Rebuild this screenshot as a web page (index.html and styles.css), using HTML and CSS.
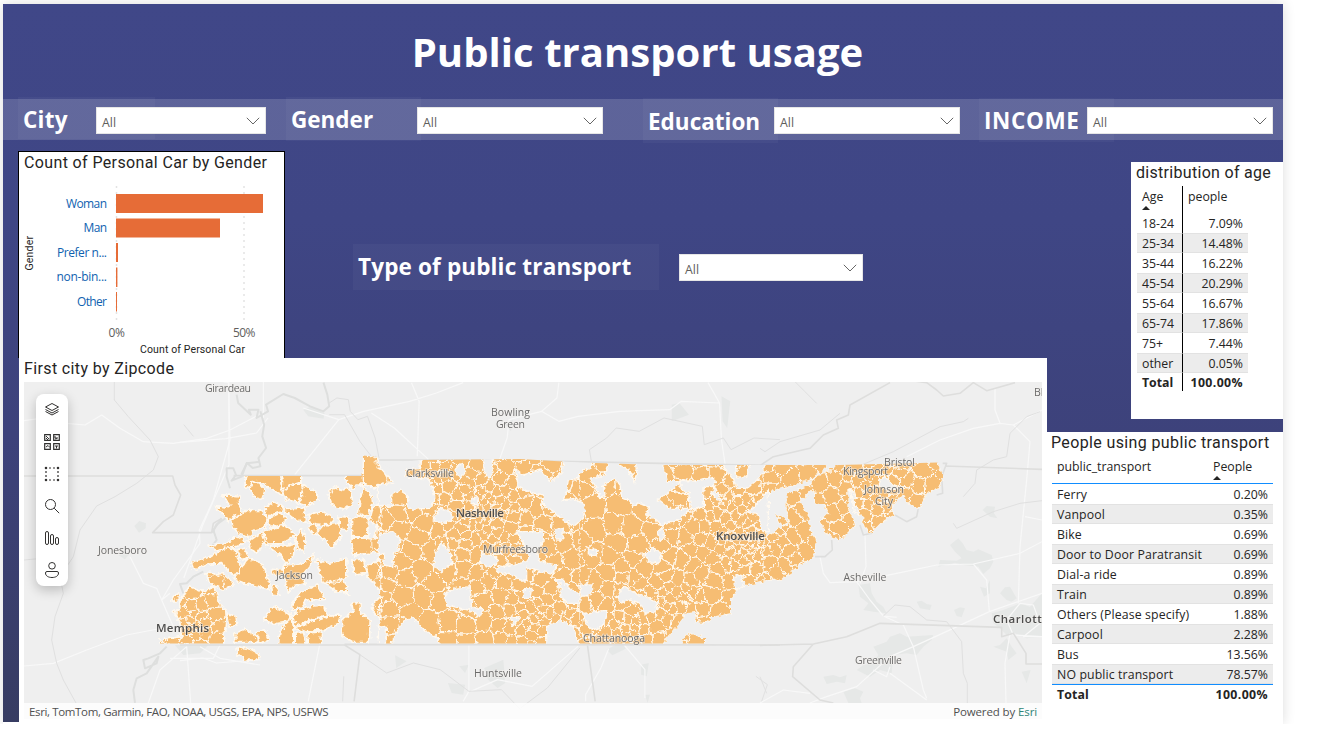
FILE: index.html
```html
<!DOCTYPE html>
<html lang="en">
<head>
<meta charset="utf-8">
<title>Public transport usage</title>
<link rel="stylesheet" href="styles.css">
</head>
<body>
<main class="report">
  <header class="report-header"><h1>Public transport usage</h1></header>

  <section class="filters">
    <div class="filter filter-city"><span class="filter-label">City</span><div class="select">All<svg class="chevron" viewBox="0 0 14 8"><path d="M.8.8 7 7 13.2.8"/></svg></div></div>
    <div class="filter filter-gender"><span class="filter-label">Gender</span><div class="select">All<svg class="chevron" viewBox="0 0 14 8"><path d="M.8.8 7 7 13.2.8"/></svg></div></div>
    <div class="filter filter-education"><span class="filter-label">Education</span><div class="select">All<svg class="chevron" viewBox="0 0 14 8"><path d="M.8.8 7 7 13.2.8"/></svg></div></div>
    <div class="filter filter-income"><span class="filter-label">INCOME</span><div class="select">All<svg class="chevron" viewBox="0 0 14 8"><path d="M.8.8 7 7 13.2.8"/></svg></div></div>
  </section>

  <div class="body">
    <div class="left">
      <div class="top-row">
        <section class="card chart-card">
          <h2 class="title">Count of Personal Car by Gender</h2>
          <svg class="chart" viewBox="19 176 265 182">
            <path class="grid" d="M116.500 186V323M244 186V323"/>
            <g class="bars">
              <rect x="116" y="194" width="147" height="19"/>
              <rect x="116" y="218.500" width="104" height="19"/>
              <rect x="116" y="243" width="2" height="19"/>
              <rect x="116" y="267.500" width="1.400" height="19.500"/>
              <rect x="116" y="292" width="1" height="19.500"/>
            </g>
            <g class="categories">
              <text x="66" y="208" textLength="41">Woman</text>
              <text x="83.500" y="232" textLength="23.500">Man</text>
              <text x="57" y="257" textLength="50">Prefer n...</text>
              <text x="56.500" y="281" textLength="50.500">non-bin...</text>
              <text x="77" y="306" textLength="30">Other</text>
            </g>
            <g class="ticks">
              <text x="108.500" y="337" textLength="16.500">0%</text>
              <text x="233" y="337" textLength="22.500">50%</text>
            </g>
            <g class="axis-titles">
              <text x="140" y="353" textLength="105">Count of Personal Car</text>
              <text transform="translate(33 270.500) rotate(-90)" textLength="34.500">Gender</text>
            </g>
          </svg>
        </section>
        <div class="filter filter-type"><span class="filter-label">Type of public transport</span><div class="select">All<svg class="chevron" viewBox="0 0 14 8"><path d="M.8.8 7 7 13.2.8"/></svg></div></div>
      </div>

      <section class="card map-card">
        <h2 class="title">First city by Zipcode</h2>
        <div class="map">
          <svg class="map-canvas" viewBox="24 382 1018 337">
            <defs>
              <filter id="rough" x="0" y="0" width="1" height="1"><feTurbulence type="fractalNoise" baseFrequency="0.25" numOctaves="2" seed="8"/><feDisplacementMap in="SourceGraphic" scale="6" xChannelSelector="R" yChannelSelector="G"/></filter>
              <clipPath id="state-outline">
                <path d="M150 476H361.500L363 455.500 378 457 380 463 394 470 394 480H402V462L420 460 520 459 580 462.500 663 465H840L920 463 937 462.500 950 470V643.500H261V664H232V643.500H150Z"/>
              </clipPath>
              <clipPath id="zip-area">
                <use href="#west"/><use href="#middle"/><use href="#east"/><use href="#northeast"/>
              </clipPath>
            </defs>
            <rect class="land" x="24" y="382" width="1018" height="337"/>

            <g class="towns">
              <path transform="translate(0 380) scale(.33333)" d="M403 438 418 423 438 430 437 445 417 458ZM355 525 390 520 375 538ZM525 795H625L600 820 550 825Z"/>
              <path transform="translate(180 378) scale(.38265 .33333)" d="M322 95 345 85 378 105 375 122 335 115ZM1285 80 1305 75 1330 110 1285 130ZM1415 55 1438 70 1430 150 1418 130ZM850 140 870 125 865 160ZM562 832 592 850 565 870ZM730 865 755 860 745 885ZM700 915 745 920 740 950 710 945ZM795 870 845 845 850 915 830 930 805 905ZM1115 815 1155 790 1165 812 1130 832ZM1205 860 1225 855 1220 895 1205 890ZM1215 950 1228 950 1222 975Z"/>
              <path transform="translate(760 380) scale(.33333)" d="M570 495 595 475 608 490 620 510 640 515 655 508 695 525 700 545 690 565 670 582 655 560 610 555 585 548 535 560 540 540 590 542 605 535 585 515ZM668 390 680 378 705 380 702 400 712 415 690 410ZM295 615 330 610 335 640 350 665 370 680 380 700 340 695 310 690 325 670 300 650ZM470 665 485 662 500 672 515 675 510 690 480 685ZM582 690 600 682 615 685 605 712 590 708ZM660 620 678 625 690 600 690 640 672 650ZM720 640 735 622 750 620 770 655 755 665 740 660ZM695 700 730 690 780 670 810 680 846 640V770L800 775 765 760 740 765 720 745 700 730ZM340 800 380 785 390 770 420 760 440 770 520 765 515 780 490 800 470 825 440 820 400 825 395 880 360 870 330 890 290 870 310 855 340 850 355 825ZM190 890 220 885 240 892 260 885 255 910 230 905 200 912ZM250 935 285 925 310 935 300 955 305 969 265 969ZM700 800 720 795 740 775 755 800 770 820 745 840 740 815ZM785 875 812 870 800 910Z"/>
            </g>

            <g class="roads">
              <path transform="translate(0 380) scale(.33333)" d="M72 122 145 112 200 130 255 135 305 105 360 145 430 185 520 190 620 175 690 150 770 108M685 0 690 180 640 360 598 450 600 490 520 600 485 660M390 530 430 610 470 625 485 660 520 740M485 660 510 640M72 858 160 850 260 810 380 765 520 738M560 800 572 969M560 800 480 870 445 969M600 800 660 835 780 855M510 835H640L660 795"/>
              <path transform="translate(180 378) scale(.38265 .33333)" d="M0 193 120 182 200 165 230 120M218 10V120M322 90 415 125 480 100 600 70 670 45 740 14M415 125 300 290M500 105 560 150 650 245M605 14 625 70 620 235M990 14 985 60 945 100 860 125 855 180 835 245M945 100 990 130 1040 115 1150 100 1280 95 1310 70 1410 75 1415 185 1425 262M1380 14 1410 75M755 800V940L740 970M760 940 830 905 920 925 1040 805M1120 812 1100 870 1060 950 1060 970M1160 800 1215 875V960M0 848 60 840 95 855 210 845M365 800 335 970M60 0 128 14V260L60 440 10 600"/>
              <path transform="translate(760 380) scale(.33333)" d="M705 25 705 90 720 130 640 145 540 180 440 230M720 130 760 135 810 185 800 300 780 500 775 670M760 135 846 90M180 530 190 580 210 608 290 605 410 580 530 555 640 552 780 520 846 485M290 605 330 660 370 708 430 735 460 800 490 930 500 955M370 708 410 712M640 552 680 600 688 695 580 745 460 800 390 830 290 920 200 950 150 969M688 695 846 640M795 410 846 420M845 770 760 765 740 720 780 670 820 675 840 730 790 770ZM750 760 735 850 738 969M390 880 500 960M340 870 380 890 390 860M0 969 70 930 150 940M315 465 318 560 300 610"/>
            </g>

            <g class="rivers">
              <path transform="translate(0 380) scale(.33333)" d="M343 0V60L385 110 450 180 475 230 460 270 410 310 345 350 290 378 240 450 220 530 180 590 190 640 165 710 155 780 170 850 190 900 228 969M72 540 160 532"/>
              <path transform="translate(180 378) scale(.38265 .33333)" d="M390 110 430 110 470 190 500 235M390 75 410 60 440 65 445 100 465 125 490 115 510 180 520 240M1075 250 1070 215 1115 180 1140 150 1200 160 1265 120 1365 145 1370 200 1420 180 1440 215 1500 180 1568 185M470 830 540 885 610 855 680 875 755 940 840 935 890 995M890 990 960 930 1045 810M428 895 425 970M1505 895 1535 920 1520 970M10 140 35 175"/>
              <path transform="translate(760 380) scale(.33333)" d="M100 0 135 35 170 70M0 205 15 215 60 185 180 150 240 100M300 257 400 215 540 140 610 125 625 115M610 350 645 310 650 270 700 240 740 230 750 160 800 110 840 95M580 430 590 445 700 395 780 370 846 362M370 708 405 675 450 680 500 720 560 725 605 785 610 880 622 910V969M0 890 20 940"/>
            </g>
            <g class="borders">
              <path transform="translate(0 380) scale(.33333)" d="M72 288H518L525 315 542 345 520 405 490 425 458 458H635L640 430 665 415"/>
              <path transform="translate(180 378) scale(.38265 .33333)" d="M140 293H480M520 246H800L1568 263M0 801H430L470 830 455 970M430 799 1568 801M1065 803 1085 970M520 246 510 235"/>
              <path transform="translate(760 380) scale(.33333)" d="M0 257 40 230 150 205 190 165 235 145 230 120 265 105 270 75 390 8M440 0 500 8 530 30 550 48 600 40 640 8 680 32 765 8M548 250 560 250 545 290 548 340 530 345M555 258 846 268M300 435 310 465 335 460M165 530 195 530 217 510 215 480M405 405 440 425 470 410 475 385M0 796 160 792 260 770 360 730 725 742V770L760 760 798 820V852H846M160 792 100 860 98 890 180 960 220 969"/>
            </g>
            <g class="big-rivers">
              <path transform="translate(0 380) scale(.33333)" d="M690 325 680 290 680 265 700 265 708 285 695 302 725 290 740 250 780 245M665 415 640 450 650 480 635 500M610 575 580 590 560 610 540 612 550 640M500 800 480 820 445 835 430 840 435 865 470 850 475 830 440 880 410 895 400 930 405 969"/>
              <path transform="translate(180 378) scale(.38265 .33333)" d="M148 50 152 75 185 110 180 95 205 95 200 120 230 100 225 80 270 48 300 60 340 85 375 100 390 85 385 50 375 14M210 100 220 140 215 175 225 210 205 240 210 265 190 270 175 255 160 290M85 465 95 440 120 420"/>
            </g>

            <g clip-path="url(#state-outline)">
            <g filter="url(#rough)">
              <g class="zip-fill">
                <path id="west" transform="translate(150 440) scale(.33333)" d="M285 125 290 100H390L398 125 395 162 365 150 340 130 310 122 296 142 287 140ZM305 128 325 125 345 150 335 178 315 172 300 148ZM390 100 455 100V125L425 135 400 150ZM398 155 430 130 455 130 458 165 440 185 410 180ZM460 135 500 155 505 180 470 198 448 190ZM535 165 550 142 580 150 600 142 608 190 585 208 555 200 540 185ZM588 100H640V132H620L610 148 590 128ZM640 45 678 48 685 70 728 92 715 100 730 130 700 128 675 143 640 133ZM640 138 665 170 668 195 650 228 625 225 630 185ZM196 200 225 205 240 195 218 165 272 168 265 190 278 220 250 235 235 245 225 225 212 215ZM243 235 290 212 330 212 352 235 345 262 310 270 300 290 265 280 250 260ZM345 205 370 185 400 200 395 215 360 225 352 240ZM355 235 390 220 410 235 395 255 360 262ZM400 210 460 203 470 248 430 235ZM335 275 405 255 435 285 400 310 350 312ZM175 315 220 312 265 290 290 305 250 322 200 332ZM300 300 335 275 350 295 320 340 295 320ZM262 330 285 325 295 350 275 362ZM125 365 180 352 230 320 255 330 272 380 265 405 240 400 215 370 170 372 130 390ZM255 410 295 355 335 370 360 430 358 448 310 435 260 425ZM355 320 400 318 435 310 430 345 410 372 390 345ZM435 290 452 270 465 290 463 335 445 325ZM400 380 460 370 488 345 480 380 455 410 465 430 430 440 415 455 408 430 400 400ZM365 388 400 390 395 408 368 405ZM365 440 378 438 388 465 368 462ZM475 225 515 215 550 235 540 255 480 250ZM475 260 495 250 505 275 490 283ZM500 280 520 255 570 250 572 290 545 325 525 300ZM565 230 598 232 595 272 570 265ZM170 400 220 402 252 432 220 450 200 440 178 428ZM500 360 540 370 590 355V410L560 430 520 425 505 385ZM525 430 580 415 600 470 590 455 560 455ZM425 495 450 460 500 435 525 478 470 480 455 500 430 510ZM90 485 118 440 155 455 195 440 208 490 225 515 228 530 220 620H30V600L95 590 90 545 68 515 90 512ZM65 480 85 455 88 480 75 485ZM232 520 258 530 260 555 240 560ZM255 580 285 568 320 590 322 607H255ZM322 575 345 570 357 600 340 607H325ZM262 620 300 628 328 645 320 660 285 660 262 640ZM340 540 370 500 420 520 415 545 375 552ZM385 620 390 575 425 530 432 570 430 620ZM430 530 440 515 480 500 520 495 530 525 480 540 435 560ZM435 565 480 545 530 530 570 525 565 550 520 570 470 575ZM436 580 460 578 470 620H436ZM474 580 515 575 510 620H474ZM575 540 610 515 605 490 630 488 632 520 660 540 658 607H612L575 585ZM605 235 640 225 655 240 652 290H605ZM670 200 692 198V268L660 240ZM605 295H650L675 300 680 255 692 290V335L650 340 610 345ZM605 360 640 358 648 400 615 405ZM650 380 692 360V450L655 410ZM665 495 692 470V540L670 515Z"/>
                <path id="middle" transform="translate(380 440) scale(.33333)" d="M0 50H602V620H0Z"/>
                <path id="east" transform="translate(580 440) scale(.33333)" d="M0 55H560V422L500 435 485 410 470 450 450 480V520L400 530 375 550 345 545 350 515 320 520 300 545 265 590 240 620H0ZM305 620V600L330 580 372 595V620Z"/>
                <path id="northeast" transform="translate(760 380) scale(.33333)" d="M12 245H215L150 300 100 315 40 330 12 345ZM80 345 150 315 170 310 155 330 120 365 145 410 150 450 168 480 160 530 120 555 110 565 60 600H12V480L50 450 90 430 80 390ZM48 402 85 425 65 438ZM155 300 250 245H370L530 240 548 290 540 320 500 340 475 385 440 365 430 340 395 380 402 405 370 420 332 460 310 435V410L285 400 280 370 275 340 265 325V380L285 435 240 480 200 460 180 425 205 400 195 375 165 370V340L155 320Z"/>
              </g>
              <use class="west-grow" href="#west"/>
              <use class="west-edge" href="#west"/>
              <g clip-path="url(#zip-area)"><path id="zip-lines" class="zip-lines" d=""/></g>
              <g class="zip-gaps">
                <path transform="translate(380 440) scale(.33333)" d="M-5 40 122 40 120 85 78 90 75 110 150 118 165 170 150 205 85 208 82 165 60 150 35 165V198L-5 200V135L40 130-5 75ZM225 90 245 65 258 95 240 115ZM312 40 335 40 340 95 325 120 312 90ZM405 85 430 105 480 90 515 125 545 95 555 50 640 50 630 85 605 95 590 115 565 120 560 150 550 180 580 175 615 195 610 235 580 260 545 235 520 215 490 200V165L440 155 415 140ZM160 240 180 205 210 215 220 235 195 250ZM-5 285 35 275 60 295 55 330 40 345 38 380 10 375 15 340-5 345ZM160 350 185 305 215 345 215 370 185 395 165 380ZM195 460 225 445 270 440 275 500 310 510 300 530 265 510 200 495ZM305 340 350 350V375L325 380 300 370ZM410 275H490V300L470 340 480 365 530 375 520 400 480 395 440 385V420H420L400 405 360 400 345 385 440 365 450 350 430 310ZM522 270 550 265 548 300 530 300ZM520 415 550 420 575 450 600 460V490H560L540 465V430ZM45 580 70 545 100 530 130 570 175 595 180 630H30ZM-5 560 20 555 15 630H-5ZM500 630V560L540 540 580 560 602 630ZM430 450 455 445 450 475 430 475ZM275 170 295 180 290 195 270 190ZM390 530 420 535 400 560Z"/>
                <path transform="translate(580 440) scale(.33333)" d="M90 50 112 68 150 95 165 125 170 95 163 50H245L262 125 300 125 285 140 262 160 235 180 265 205 330 205 300 240 245 255 230 240 200 225 205 200 180 190 160 200 150 180 125 175 120 135 105 115 70 135 75 165 60 175 50 145 30 115 75 105ZM300 120 350 125 400 110 405 140 372 140 370 200 335 210 325 160 300 145ZM465 60 470 110 500 112 510 60H552V100L520 130 500 145 470 145 462 120 435 90 440 60ZM530 195 565 150V275H550L535 225 500 215ZM195 345 220 325 245 345 240 365 215 370ZM110 470 130 440 180 465 235 490 225 515 195 520 180 490 150 480 120 490ZM10 520 80 510 70 560 40 570 20 555ZM230 275 245 260 255 290 240 300ZM455 410 485 405 490 440 470 450ZM25 325 55 330 50 348 25 345ZM400 140 430 190 415 185 395 155ZM0 435 40 435 30 465 5 470Z"/>
                <path transform="translate(760 380) scale(.33333)" d="M355 300 375 290 395 310 415 325 390 330 360 320ZM270 325 285 345 283 370 300 405 285 400Z"/>
              </g>
            </g>
            </g>

            <g class="labels">
              <text x="205" y="392" textLength="46">Girardeau</text>
              <text x="491" y="416" textLength="39">Bowling</text>
              <text x="496" y="428" textLength="29">Green</text>
              <text x="406" y="477" textLength="48">Clarksville</text>
              <text x="483" y="553" textLength="65">Murfreesboro</text>
              <text x="98" y="553.500" textLength="49">Jonesboro</text>
              <text x="276" y="578.500" textLength="37">Jackson</text>
              <text x="583" y="642" textLength="62">Chattanooga</text>
              <text x="474" y="677" textLength="48">Huntsville</text>
              <text x="884" y="466" textLength="31">Bristol</text>
              <text x="843" y="474.500" textLength="45">Kingsport</text>
              <text x="864" y="493" textLength="40">Johnson</text>
              <text x="875" y="505" textLength="18">City</text>
              <text x="843.500" y="581" textLength="43">Asheville</text>
              <text x="855" y="664" textLength="47">Greenville</text>
              <text x="1034" y="396">Bl</text>
            </g>
            <g class="labels major">
              <text x="156" y="631.500" textLength="53">Memphis</text>
              <text x="456" y="516.500" textLength="48">Nashville</text>
              <text x="716" y="539.500" textLength="49">Knoxville</text>
              <text x="993" y="622.500" textLength="56">Charlotte</text>
            </g>
          </svg>
          <div class="toolbar">
            <svg viewBox="0 0 16 16"><path d="M8 1.500 14.500 5 8 8.500 1.500 5ZM1.500 7.500 8 11l6.500-3.500M1.500 9.500 8 13l6.500-3.500"/></svg>
            <svg viewBox="0 0 16 16"><path class="strong" d="M.7.7h5.600v5.600H.7ZM9.700.7h5.600v5.600H9.700ZM.7 9.700h5.600v5.600H.7ZM9.700 9.700h5.600v5.600H9.700Z"/><path d="M2 2l3 3M2 4l2 2M11 2v2h3M11 5l2-.5M2 13l2-1.500 2 2M11 12h3M12.500 12v2.500"/></svg>
            <svg viewBox="0 0 16 16"><path class="strong" d="M5 2h2M9 2h2M5 14h2M9 14h2M2 5v2M2 9v2M14 5v2M14 9v2"/><path class="dots" d="M2 2h.01M14 2h.01M2 14h.01M14 14h.01"/></svg>
            <svg viewBox="0 0 16 16"><circle cx="6.500" cy="6.500" r="5"/><path d="m10.200 10.200 5 5"/></svg>
            <svg viewBox="0 0 16 16"><rect x="1.500" y="1.500" width="3" height="13" rx="1.500"/><rect x="6.500" y="4.500" width="3" height="10" rx="1.500"/><rect x="11.500" y="7.500" width="3" height="7" rx="1.500"/></svg>
            <svg viewBox="0 0 16 16"><circle cx="8" cy="3.800" r="3.300"/><path d="M3 9.500h10a1.500 1.500 0 0 1 1.500 1.500c0 3-3 4.500-6.500 4.500S1.500 14 1.500 11A1.500 1.500 0 0 1 3 9.500Z"/></svg>
          </div>
          <div class="attribution"><span class="sources">Esri, TomTom, Garmin, FAO, NOAA, USGS, EPA, NPS, USFWS</span><span class="powered">Powered by <a>Esri</a></span></div>
        </div>
      </section>
    </div>

    <div class="right">
      <section class="card age-card">
        <h2 class="title">distribution of age</h2>
        <table class="age-table">
          <thead><tr><th>Age<i class="sort"></i></th><th>people</th></tr></thead>
          <tbody>
            <tr><td>18-24</td><td>7.09%</td></tr>
            <tr><td>25-34</td><td>14.48%</td></tr>
            <tr><td>35-44</td><td>16.22%</td></tr>
            <tr><td>45-54</td><td>20.29%</td></tr>
            <tr><td>55-64</td><td>16.67%</td></tr>
            <tr><td>65-74</td><td>17.86%</td></tr>
            <tr><td>75+</td><td>7.44%</td></tr>
            <tr><td>other</td><td>0.05%</td></tr>
          </tbody>
          <tfoot><tr><td>Total</td><td>100.00%</td></tr></tfoot>
        </table>
      </section>
      <section class="card transport-card">
        <h2 class="title">People using public transport</h2>
        <table class="transport-table">
          <thead><tr><th>public_transport</th><th>People<i class="sort"></i></th></tr></thead>
          <tbody>
            <tr><td>Ferry</td><td>0.20%</td></tr>
            <tr><td>Vanpool</td><td>0.35%</td></tr>
            <tr><td>Bike</td><td>0.69%</td></tr>
            <tr><td>Door to Door Paratransit</td><td>0.69%</td></tr>
            <tr><td>Dial-a ride</td><td>0.89%</td></tr>
            <tr><td>Train</td><td>0.89%</td></tr>
            <tr><td>Others (Please specify)</td><td>1.88%</td></tr>
            <tr><td>Carpool</td><td>2.28%</td></tr>
            <tr><td>Bus</td><td>13.56%</td></tr>
            <tr><td>NO public transport</td><td>78.57%</td></tr>
          </tbody>
          <tfoot><tr><td>Total</td><td>100.00%</td></tr></tfoot>
        </table>
      </section>
    </div>
  </div>
</main>
<script src="map.js"></script>
</body>
</html>
```
FILE: styles.css
```css
* { box-sizing: border-box; }
body { margin: 0; padding: 4px 0 0 3px; background: #fff; font-family: "Open Sans", "Noto Sans", sans-serif; color: #252423; overflow: hidden; }
.report { width: 1280px; height: 720px; display: flex; flex-direction: column; background: #fff linear-gradient(#404788, #3f4685 30%, #3d427b 60%, #373c62) no-repeat 0 0 / 100% 718px; box-shadow: 0 0 12px rgba(0,0,0,.14); }
.report-header { height: 95px; display: flex; justify-content: center; padding-right: 11px; }
h1 { margin: 20px 0 0; color: #fff; font-size: 40px; line-height: 56px; font-weight: 700; letter-spacing: .05px; white-space: nowrap; }

.filters { height: 41px; display: flex; background: rgba(255,255,255,.16); }
.filter { display: flex; align-items: flex-start; flex: none; }
.filter-label { flex: none; width: 135px; height: 44px; padding: 6px 0 0 5px; background: rgba(255,255,255,.035); color: #fff; font-size: 22.500px; line-height: 34px; font-weight: 700; white-space: nowrap; }
.filter .select { position: relative; flex: none; width: 186px; height: 27px; margin: 8px 0 0 -4px; padding: 2px 5px 0; border: 1px solid #e6e6e6; background: #fff; color: #605e5c; font-size: 12.300px; line-height: 25px; }
.chevron { position: absolute; right: 5px; top: 9px; width: 14px; height: 8px; fill: none; stroke: #666; stroke-width: 1; }
.filter-city { margin-left: 15px; }
.filter-city .filter-label { width: 137px; height: 42px; margin-top: -2px; letter-spacing: .25px; }
.filter-city .select { width: 170px; margin-left: -59px; }
.filter-gender { margin-left: 20px; }
.filter-gender .filter-label { margin-top: -2px; }
.filter-education { margin-left: 40px; }
.filter-education .filter-label { margin-top: -1px; height: 45px; padding-top: 7px; }
.filter-income { margin-left: 19px; }
.filter-income .filter-label { margin-top: -1px; letter-spacing: .6px; }
.filter-income .select { margin-left: -27px; }
.filter-type { margin: 93px 0 0 68px; }
.filter-type .filter-label { width: 306px; height: 46px; letter-spacing: .15px; }
.filter-type .select { width: 184px; margin: 10px 0 0 20px; }

.body { flex: 1; min-height: 0; display: flex; }
.left { width: 1044px; padding: 11px 0 0 15px; }
.top-row { display: flex; height: 207px; }
.card { background: #fff; }
.title { margin: 0; padding: 1px 0 0 5px; font: 400 16px/20px Roboto, sans-serif; letter-spacing: .37px; color: #252423; white-space: nowrap; }
.chart-card { width: 267px; height: 207px; border: 1px solid #000; border-bottom: 0; }
.chart-card .title { height: 24px; }
.chart { display: block; width: 265px; height: 182px; }
.grid { stroke: #e3e3e3; stroke-width: 1.500; stroke-dasharray: 2 4; fill: none; }
.bars { fill: #e66c37; }
.categories { font-size: 12px; fill: #0f62b0; }
.ticks { font-size: 12px; fill: #605e5c; }
.axis-titles { font: 10.500px Roboto, sans-serif; fill: #252423; }

.map-card { width: 1028px; height: 366px; margin-left: 1px; padding-bottom: 5px; }
.map-card .title { height: 24px; }
.map { position: relative; width: 1018px; height: 337px; margin-left: 5px; overflow: hidden; }
.map-canvas { display: block; width: 1018px; height: 337px; }
.land { fill: #efefef; }
.towns { fill: #e6e8e7; }
.roads, .rivers, .borders, .big-rivers { fill: none; stroke-linejoin: round; }
.roads path { stroke: #f8f8f8; stroke-width: 1.200; vector-effect: non-scaling-stroke; }
.rivers path { stroke: #e0e0e0; stroke-width: 1; vector-effect: non-scaling-stroke; }
.borders path { stroke: #dededd; stroke-width: 1.600; vector-effect: non-scaling-stroke; }
.big-rivers path { stroke: #dedfde; stroke-width: 2; vector-effect: non-scaling-stroke; }
.zip-fill { fill: #f6bd73; }
.zip-fill path { stroke: #fff9ef; stroke-width: 4; paint-order: stroke; }
.west-grow { fill: #f6bd73; stroke: #f6bd73; stroke-width: 9; }
.west-edge { fill: none; stroke: #fff9ef; stroke-width: 3; }
.zip-lines { fill: none; stroke: #fff9ee; stroke-width: .95; }
.zip-gaps { fill: #efefef; stroke: #fff9f0; stroke-width: 4; }
.labels { font-size: 10.500px; fill: #6b6b6b; stroke: rgba(245,242,238,.6); stroke-width: 1.500; paint-order: stroke; }
.labels.major { font-size: 11.500px; font-weight: 600; fill: #4d4d4d; }

.toolbar { position: absolute; left: 12px; top: 12px; width: 32px; height: 192px; display: flex; flex-direction: column; align-items: center; justify-content: space-around; border-radius: 8px; background: #fff; box-shadow: 0 4px 12px rgba(0,0,0,.22); }
.toolbar svg { width: 16px; height: 16px; fill: none; stroke: #323130; stroke-width: 1; }
.toolbar .strong { stroke-width: 1.200; }
.toolbar .dots { stroke-width: 2.600; stroke-linecap: round; }
.attribution { position: absolute; left: 0; right: 0; bottom: 0; height: 16px; display: flex; justify-content: space-between; padding: 0 5px; background: rgba(255,255,255,.82); color: #505050; font-size: 11.500px; line-height: 17px; white-space: nowrap; }
.attribution .sources { letter-spacing: -.36px; }
.attribution .powered { letter-spacing: -.12px; }
.attribution a { color: #2f8577; }

.right { width: 236px; display: flex; flex-direction: column; align-items: flex-end; padding-top: 22px; }
.age-card { width: 152px; height: 257px; }
.age-card .title { letter-spacing: .3px; }
.transport-card { width: 236px; height: 292px; margin-top: 13px; }
.transport-card .title { padding-left: 4px; }
table { border-collapse: separate; border-spacing: 0; table-layout: fixed; font-size: 12.300px; line-height: 19px; white-space: nowrap; }
th, td { padding: 0 5px; font-weight: 400; text-align: left; }
td { height: 20px; }
td + td { text-align: right; }
tbody tr:nth-child(even) td { background: #ececec; border-top: 1px solid #e2e2e2; border-bottom: 1px solid #e2e2e2; line-height: 17px; padding-top: 1px; }
tfoot td { font-weight: 700; }
tfoot td + td { letter-spacing: .4px; }
th { position: relative; vertical-align: top; }
.sort { position: absolute; left: 5px; top: 20px; border: 4.500px solid transparent; border-top: 0; border-bottom: 4px solid #252423; }
.age-table { width: 111px; margin: 3px 0 0 6px; }
.age-table th { height: 27px; padding-top: 1px; }
.age-table tr > :first-child { width: 46px; border-right: 1px solid #000; padding-right: 0; }
.age-table tfoot td { height: 18px; line-height: 17px; }
.transport-table { width: 221px; margin: 3px 0 0 5px; }
.transport-table td:first-child { letter-spacing: .12px; }
.transport-table th { height: 28px; padding-top: 1px; border-bottom: 1px solid #118dff; }
.transport-table th:last-child { width: 65px; }
.transport-table tfoot td { border-top: 1px solid #118dff; }
```
FILE: map.js
```js
// Zip-code borders: cells around scattered centres, finer near the large cities.
(function () {
  var state = 20231;
  function rnd() { state = (state * 1103515245 + 12345) % 2147483648; return state / 2147483648; }
  var cities = [[188, 628, 6], [482, 512, 4], [745, 540, 4], [632, 625, 5], [872, 488, 6], [505, 545, 7], [345, 520, 14], [540, 615, 5], [670, 600, 6], [435, 475, 6], [725, 510, 5]];
  function spacing(x, y) {
    var r = 16;
    cities.forEach(function (c) { r = Math.min(r, c[2] + Math.hypot(x - c[0], y - c[1]) * 0.17); });
    return r;
  }
  // West of the Tennessee river only the Memphis area is subdivided further.
  function plain(x, y) { return x < 380 && !(x < 226 && y > 585); }
  var pts = [];
  for (var i = 0; i < 20000; i++) {
    var p = [150 + rnd() * 800, 450 + rnd() * 215], r = spacing(p[0], p[1]) * (0.75 + rnd() * 0.5);
    if (pts.every(function (q) { return Math.hypot(p[0] - q[0], p[1] - q[1]) > r; })) pts.push(p);
  }
  function clip(poly, a, b) {
    var mx = (a[0] + b[0]) / 2, my = (a[1] + b[1]) / 2, nx = b[0] - a[0], ny = b[1] - a[1], out = [];
    for (var k = 0; k < poly.length; k++) {
      var p = poly[k], q = poly[(k + 1) % poly.length];
      var dp = (p[0] - mx) * nx + (p[1] - my) * ny, dq = (q[0] - mx) * nx + (q[1] - my) * ny;
      if (dp <= 0) out.push(p);
      if (dp * dq < 0) { var t = dp / (dp - dq); out.push([p[0] + (q[0] - p[0]) * t, p[1] + (q[1] - p[1]) * t]); }
    }
    return out;
  }
  var d = '';
  pts.forEach(function (a) {
    if (plain(a[0], a[1])) return;
    var cell = [[a[0] - 40, a[1] - 40], [a[0] + 40, a[1] - 40], [a[0] + 40, a[1] + 40], [a[0] - 40, a[1] + 40]];
    pts.forEach(function (b) { if (a !== b && Math.hypot(a[0] - b[0], a[1] - b[1]) < 80) cell = clip(cell, a, b); });
    d += 'M' + cell.map(function (p) { return p[0].toFixed(1) + ' ' + p[1].toFixed(1); }).join('L') + 'Z';
  });
  document.getElementById('zip-lines').setAttribute('d', d);
})();
```
